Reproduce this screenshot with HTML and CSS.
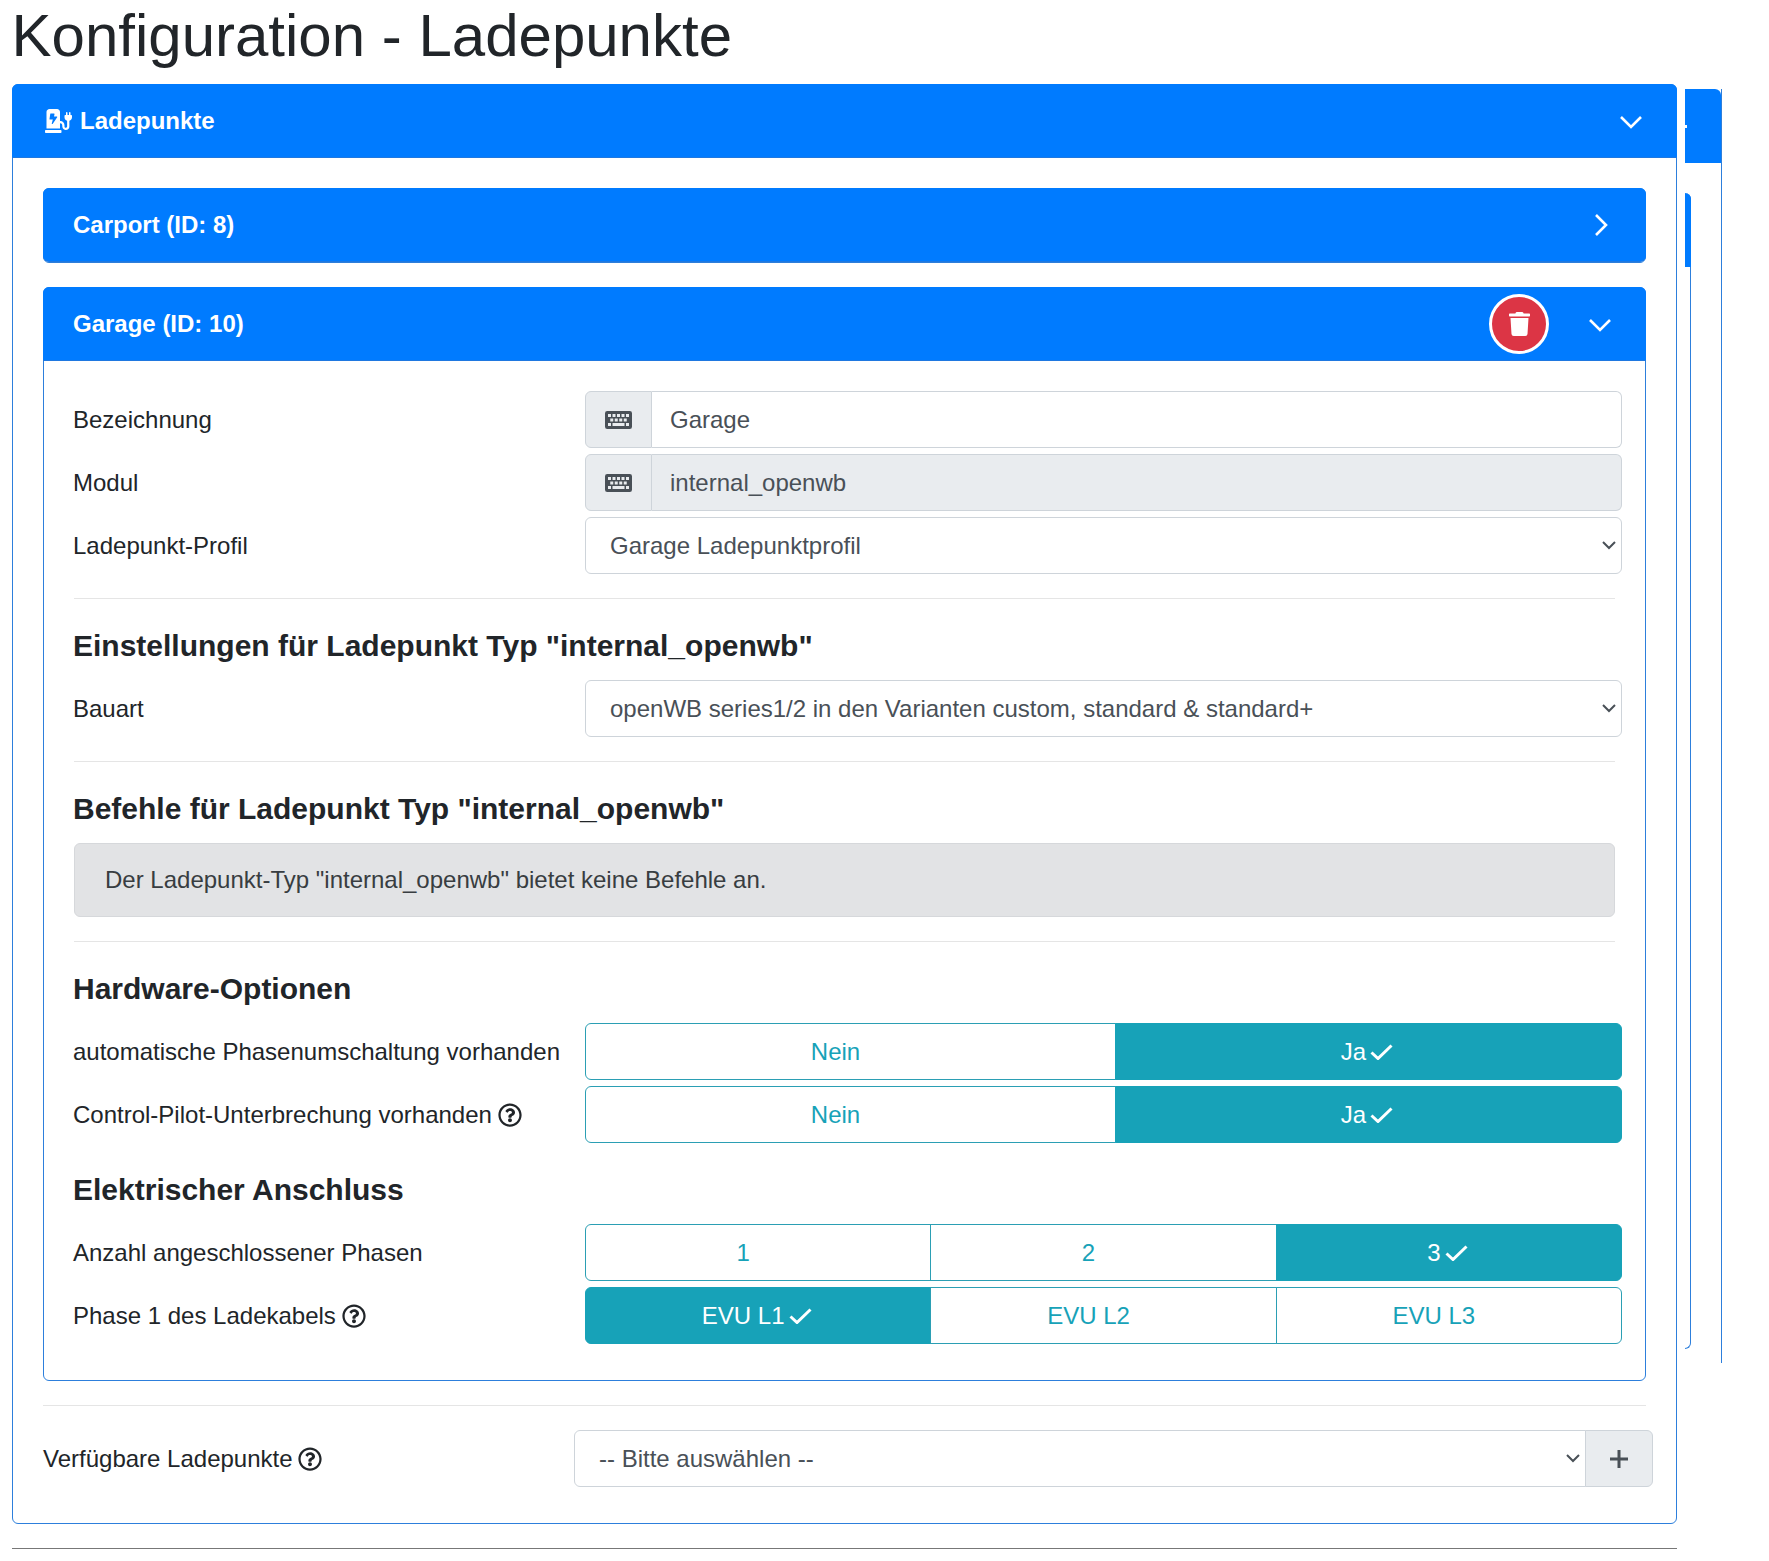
FILE: index.html
```html
<!DOCTYPE html>
<html lang="de">
<head>
<meta charset="utf-8">
<title>Konfiguration - Ladepunkte</title>
<link rel="stylesheet" href="styles.css">
</head>
<body>
<h1 class="page-title">Konfiguration - Ladepunkte</h1>
<div class="layout">
  <main class="main">
    <section class="card">
      <header class="card-header card-header--outer">
        <svg class="icon-station" viewBox="0 0 576 512"><path fill="#fff" d="M336 448H16c-8.84 0-16 7.16-16 16v32c0 8.84 7.16 16 16 16h320c8.84 0 16-7.16 16-16v-32c0-8.84-7.16-16-16-16zm208-320V80c0-8.84-7.16-16-16-16s-16 7.16-16 16v48h-32V80c0-8.84-7.16-16-16-16s-16 7.16-16 16v48h-16c-8.84 0-16 7.16-16 16v32c0 35.76 23.62 65.69 56 75.93v118.49c0 13.95-9.5 26.92-23.26 29.19C431.22 402.5 416 388.99 416 372v-28c0-48.6-39.4-88-88-88h-8V64c0-35.35-28.65-64-64-64H96C60.65 0 32 28.65 32 64v352h288V304h8c22.09 0 40 17.91 40 40v24.61c0 39.67 28.92 75.16 68.41 79.01C481.71 452.05 520 416.41 520 372V251.93c32.38-10.24 56-40.17 56-75.93v-32c0-8.84-7.16-16-16-16h-16zm-283.91 47.76l-93.7 139c-2.2 3.33-6.21 5.24-10.39 5.24-7.67 0-13.47-6.28-11.67-12.92L167.35 224H108c-7.25 0-12.85-5.59-11.89-11.89l16-107C112.9 99.9 117.98 96 124 96h68c7.88 0 13.62 6.51 11.6 13.12L192 160h57.7c9.24 0 15.01 8.78 10.39 15.76z"/></svg>
        <span class="card-title">Ladepunkte</span>
        <svg class="chevron chevron--down" viewBox="0 0 22 22"><path d="M1 6l10 10L21 6"/></svg>
      </header>
      <div class="card-body">
        <section class="card card--closed">
          <header class="card-header card-header--closed">
            <span class="card-title">Carport (ID: 8)</span>
            <svg class="chevron" viewBox="0 0 22 22"><path d="M7 1l10 10L7 21"/></svg>
          </header>
        </section>

        <section class="card">
          <header class="card-header">
            <span class="card-title">Garage (ID: 10)</span>
            <button class="btn-delete" type="button" aria-label="Löschen">
              <svg class="icon-trash" viewBox="0 0 448 512"><path fill="#fff" d="M432 32H312l-9.4-18.7A24 24 0 0 0 281.1 0H166.8a23.72 23.72 0 0 0-21.4 13.3L136 32H16A16 16 0 0 0 0 48v32a16 16 0 0 0 16 16h416a16 16 0 0 0 16-16V48a16 16 0 0 0-16-16zM53.2 467a48 48 0 0 0 47.9 45h245.8a48 48 0 0 0 47.9-45L416 128H32z"/></svg>
            </button>
            <svg class="chevron chevron--down" viewBox="0 0 22 22"><path d="M1 6l10 10L21 6"/></svg>
          </header>
          <div class="card-body">
            <div class="form-row">
              <label class="form-label">Bezeichnung</label>
              <div class="input-group">
                <span class="addon addon--left"><svg class="icon-keyboard" viewBox="0 0 576 512"><path fill-rule="evenodd" fill="#495057" d="M48 64h480a48 48 0 0 1 48 48v288a48 48 0 0 1-48 48H48a48 48 0 0 1-48-48V112a48 48 0 0 1 48-48zM64 128v64h64v-64zm96 0v64h64v-64zm96 0v64h64v-64zm96 0v64h64v-64zm96 0v64h64v-64zM112 224v64h64v-64zm96 0v64h64v-64zm96 0v64h64v-64zm96 0v64h64v-64zM64 320v64h64v-64zm96 0v64h256v-64zm288 0v64h64v-64z"/></svg></span>
                <input class="control control--grouped" type="text" value="Garage">
              </div>
            </div>
            <div class="form-row">
              <label class="form-label">Modul</label>
              <div class="input-group">
                <span class="addon addon--left"><svg class="icon-keyboard" viewBox="0 0 576 512"><path fill-rule="evenodd" fill="#495057" d="M48 64h480a48 48 0 0 1 48 48v288a48 48 0 0 1-48 48H48a48 48 0 0 1-48-48V112a48 48 0 0 1 48-48zM64 128v64h64v-64zm96 0v64h64v-64zm96 0v64h64v-64zm96 0v64h64v-64zm96 0v64h64v-64zM112 224v64h64v-64zm96 0v64h64v-64zm96 0v64h64v-64zm96 0v64h64v-64zM64 320v64h64v-64zm96 0v64h256v-64zm288 0v64h64v-64z"/></svg></span>
                <input class="control control--grouped control--readonly" type="text" value="internal_openwb" readonly>
              </div>
            </div>
            <div class="form-row">
              <label class="form-label">Ladepunkt-Profil</label>
              <select class="control control--select"><option>Garage Ladepunktprofil</option></select>
            </div>

            <hr class="divider">
            <h3 class="section-title">Einstellungen für Ladepunkt Typ "internal_openwb"</h3>
            <div class="form-row">
              <label class="form-label">Bauart</label>
              <select class="control control--select"><option>openWB series1/2 in den Varianten custom, standard &amp; standard+</option></select>
            </div>

            <hr class="divider">
            <h3 class="section-title">Befehle für Ladepunkt Typ "internal_openwb"</h3>
            <div class="notice">Der Ladepunkt-Typ "internal_openwb" bietet keine Befehle an.</div>

            <hr class="divider divider--after-notice">
            <h3 class="section-title">Hardware-Optionen</h3>
            <div class="form-row">
              <label class="form-label">automatische Phasenumschaltung vorhanden</label>
              <div class="btn-group">
                <button class="seg" type="button">Nein<svg class="check check--hidden" viewBox="0 0 26 16"><path d="M1.5 8.5l6.5 6L21.5 1.5"/></svg></button>
                <button class="seg seg--on" type="button">Ja<svg class="check" viewBox="0 0 26 16"><path d="M1.5 8.5l6.5 6L21.5 1.5"/></svg></button>
              </div>
            </div>
            <div class="form-row">
              <label class="form-label">Control-Pilot-Unterbrechung vorhanden
                <svg class="icon-help" viewBox="0 0 512 512"><use href="#help"/></svg></label>
              <div class="btn-group">
                <button class="seg" type="button">Nein<svg class="check check--hidden" viewBox="0 0 26 16"><path d="M1.5 8.5l6.5 6L21.5 1.5"/></svg></button>
                <button class="seg seg--on" type="button">Ja<svg class="check" viewBox="0 0 26 16"><path d="M1.5 8.5l6.5 6L21.5 1.5"/></svg></button>
              </div>
            </div>

            <h3 class="section-title section-title--plain">Elektrischer Anschluss</h3>
            <div class="form-row">
              <label class="form-label">Anzahl angeschlossener Phasen</label>
              <div class="btn-group">
                <button class="seg" type="button">1<svg class="check check--hidden" viewBox="0 0 26 16"><path d="M1.5 8.5l6.5 6L21.5 1.5"/></svg></button>
                <button class="seg" type="button">2<svg class="check check--hidden" viewBox="0 0 26 16"><path d="M1.5 8.5l6.5 6L21.5 1.5"/></svg></button>
                <button class="seg seg--on" type="button">3<svg class="check" viewBox="0 0 26 16"><path d="M1.5 8.5l6.5 6L21.5 1.5"/></svg></button>
              </div>
            </div>
            <div class="form-row">
              <label class="form-label">Phase 1 des Ladekabels
                <svg class="icon-help" viewBox="0 0 512 512"><use href="#help"/></svg></label>
              <div class="btn-group">
                <button class="seg seg--on" type="button">EVU L1<svg class="check" viewBox="0 0 26 16"><path d="M1.5 8.5l6.5 6L21.5 1.5"/></svg></button>
                <button class="seg" type="button">EVU L2<svg class="check check--hidden" viewBox="0 0 26 16"><path d="M1.5 8.5l6.5 6L21.5 1.5"/></svg></button>
                <button class="seg" type="button">EVU L3<svg class="check check--hidden" viewBox="0 0 26 16"><path d="M1.5 8.5l6.5 6L21.5 1.5"/></svg></button>
              </div>
            </div>
          </div>
        </section>

        <hr class="divider divider--wide">
        <div class="form-row form-row--outer">
          <label class="form-label">Verfügbare Ladepunkte
            <svg class="icon-help" viewBox="0 0 512 512"><use href="#help"/></svg></label>
          <div class="input-group">
            <select class="control control--select control--select-left"><option>-- Bitte auswählen --</option></select>
            <button class="addon addon--right" type="button" aria-label="Hinzufügen"><svg class="icon-plus" viewBox="0 0 20 20"><path d="M10 1v18M1 10h18"/></svg></button>
          </div>
        </div>
      </div>
    </section>
    <hr class="page-rule">
  </main>

  <aside class="side">
    <div class="side-card">
      <div class="side-header"><span class="side-dot"></span></div>
      <div class="side-inner">
        <div class="side-inner-header"></div>
      </div>
    </div>
  </aside>
</div>

<svg class="sprite" aria-hidden="true"><defs><path id="help" fill="#212529" d="M256 8C119.043 8 8 119.083 8 256c0 136.997 111.043 248 248 248s248-111.003 248-248C504 119.083 392.957 8 256 8zm0 448c-110.532 0-200-89.431-200-200 0-110.495 89.472-200 200-200 110.491 0 200 89.471 200 200 0 110.53-89.431 200-200 200zm107.244-255.2c0 67.052-72.421 68.084-72.421 92.863V300c0 6.627-5.373 12-12 12h-45.647c-6.627 0-12-5.373-12-12v-8.659c0-35.745 27.1-50.034 47.579-61.516 17.561-9.845 28.324-16.541 28.324-29.579 0-17.246-21.999-28.693-39.784-28.693-23.189 0-33.894 10.977-48.942 29.969-4.057 5.12-11.46 6.071-16.666 2.124l-27.824-21.098c-5.107-3.872-6.251-11.066-2.644-16.363C184.846 131.491 214.94 112 261.794 112c49.071 0 101.45 38.304 101.45 88.8zM298 368c0 23.159-18.841 42-42 42s-42-18.841-42-42 18.841-42 42-42 42 18.841 42 42z"/></defs></svg>
</body>
</html>
```

FILE: styles.css
```css
* { box-sizing: border-box; }

html, body { margin: 0; padding: 0; }

body {
  padding: 0 12px;
  background: #fff;
  color: #212529;
  font-family: "Liberation Sans", Arial, sans-serif;
  font-size: 24px;
  line-height: 36px;
}

.page-title {
  margin: 0 0 12px -0.5px;
  font-size: 60px;
  font-weight: 400;
  line-height: 72px;
}

.layout {
  display: flex;
  gap: 8px;
  align-items: flex-start;
}

.main { width: 1665px; flex: none; }

/* cards */
.card {
  margin-bottom: 24px;
  border: 1px solid #2d7fdc;
  border-radius: 6px;
  background: #fff;
}

.main > .card { margin-bottom: 0; }

.card-header {
  display: flex;
  align-items: center;
  height: 74px;
  margin: -1px -1px 0;
  padding-left: 30px;
  padding-right: 35px;
  border-bottom: 1px solid #1f78e0;
  border-radius: 6px 6px 0 0;
  background: #007bff;
  color: #fff;
}

.card-header--outer { padding-left: 33px; }

.card-header--closed { border-radius: 6px; }

.card-title { font-weight: 700; }

.icon-station { width: 27px; height: 24px; margin-right: 8px; }

.chevron {
  width: 22px;
  height: 22px;
  margin-left: auto;
  fill: none;
  stroke: #fff;
  stroke-width: 2.6;
}

.chevron--down { margin-top: 2px; }

.btn-delete + .chevron { margin-left: 40px; }

.btn-delete {
  display: flex;
  align-items: center;
  justify-content: center;
  width: 60px;
  height: 60px;
  margin-left: auto;
  padding: 0;
  border: 3px solid #fff;
  border-radius: 50%;
  background: #dc3545;
}

.icon-trash { width: 21px; height: 24px; }

.card-body { padding: 30px; }

/* rows */
.form-row {
  display: grid;
  grid-template-columns: 511px 1fr;
  align-items: center;
  min-height: 57px;
  margin: 0 -7px 6px 0;
}

.form-row--outer { grid-template-columns: 531px 1fr; }

.form-label { display: block; }

.card .card .form-label { margin-left: -1px; }

.icon-help { width: 24px; height: 24px; vertical-align: -4px; margin-left: -1px; }

.input-group { display: flex; height: 57px; }

.control {
  display: block;
  width: 100%;
  height: 57px;
  min-width: 0;
  padding: 0 18px;
  border: 1px solid #ced4da;
  border-radius: 6px;
  background: #fff;
  color: #495057;
  font: inherit;
}

.control--grouped { flex: 1; border-radius: 0 6px 6px 0; border-left: 0; }

.control--readonly { background: #e9ecef; }

.control--select {
  padding-left: 24px;
  appearance: none;
  background-image: url("data:image/svg+xml,%3Csvg xmlns='http://www.w3.org/2000/svg' width='14' height='9' viewBox='0 0 14 9'%3E%3Cpath d='M1 1l6 6 6-6' fill='none' stroke='%23495057' stroke-width='2'/%3E%3C/svg%3E");
  background-repeat: no-repeat;
  background-position: right 5px center;
}

.control--select-left { flex: 1; border-radius: 6px 0 0 6px; }

.addon {
  display: flex;
  flex: none;
  align-items: center;
  justify-content: center;
  border: 1px solid #ced4da;
  background: #e9ecef;
}

.addon--left { width: 67px; border-radius: 6px 0 0 6px; }

.addon--right {
  width: 68px;
  margin-left: -1px;
  padding: 0;
  border-radius: 0 6px 6px 0;
}

.icon-keyboard { width: 27px; height: 24px; }

.icon-plus {
  width: 20px;
  height: 20px;
  fill: none;
  stroke: #495057;
  stroke-width: 3;
}

/* segmented buttons */
.btn-group { display: flex; height: 57px; }

.seg {
  display: flex;
  flex: 1 1 auto;
  align-items: center;
  justify-content: center;
  min-width: 0;
  margin-left: -1px;
  padding: 0 18px;
  border: 1px solid #2b9fb4;
  background: #fff;
  color: #17a2b8;
  font: inherit;
}

.seg:first-child { margin-left: 0; border-radius: 6px 0 0 6px; }

.seg:last-child { border-radius: 0 6px 6px 0; }

.seg--on { border-color: #17a2b8; background: #17a2b8; color: #fff; }

.check {
  width: 26px;
  height: 16px;
  margin-left: 4px;
  fill: none;
  stroke: #fff;
  stroke-width: 3;
}

.check--hidden { visibility: hidden; }

/* sections */
.divider {
  height: 1px;
  margin: 24px 0 0;
  border: 0;
  background: #e5e5e5;
}

.divider--wide { margin: 0 0 24px; }

.section-title {
  margin: 29px 0 16px -1px;
  font-size: 30px;
  font-weight: 700;
  line-height: 36px;
}

.notice {
  padding: 18px 30px;
  border: 1px solid #d6d8db;
  border-radius: 6px;
  background: #e2e3e5;
  color: #383d41;
}

.page-rule {
  height: 1px;
  margin: 24px 0 0;
  border: 0;
  background: #777;
}

/* neighbouring column, clipped at the right */
.side { width: 37px; flex: none; padding-top: 5px; }

.side-card { height: 1274px; border-right: 1px solid #2d7fdc; }

.side-header {
  display: flex;
  align-items: center;
  height: 74px;
  border-radius: 0 6px 0 0;
  background: #007bff;
}

.side-dot { width: 2px; height: 3px; background: #fff; }

.side-inner {
  width: 6px;
  height: 1156px;
  margin-top: 30px;
  border-right: 1px solid #2d7fdc;
  border-bottom: 1px solid #2d7fdc;
  border-radius: 0 6px 6px 0;
}

.side-inner-header {
  height: 74px;
  margin-right: -1px;
  border-radius: 0 6px 0 0;
  background: #007bff;
}

.sprite { position: absolute; width: 0; height: 0; }
```
